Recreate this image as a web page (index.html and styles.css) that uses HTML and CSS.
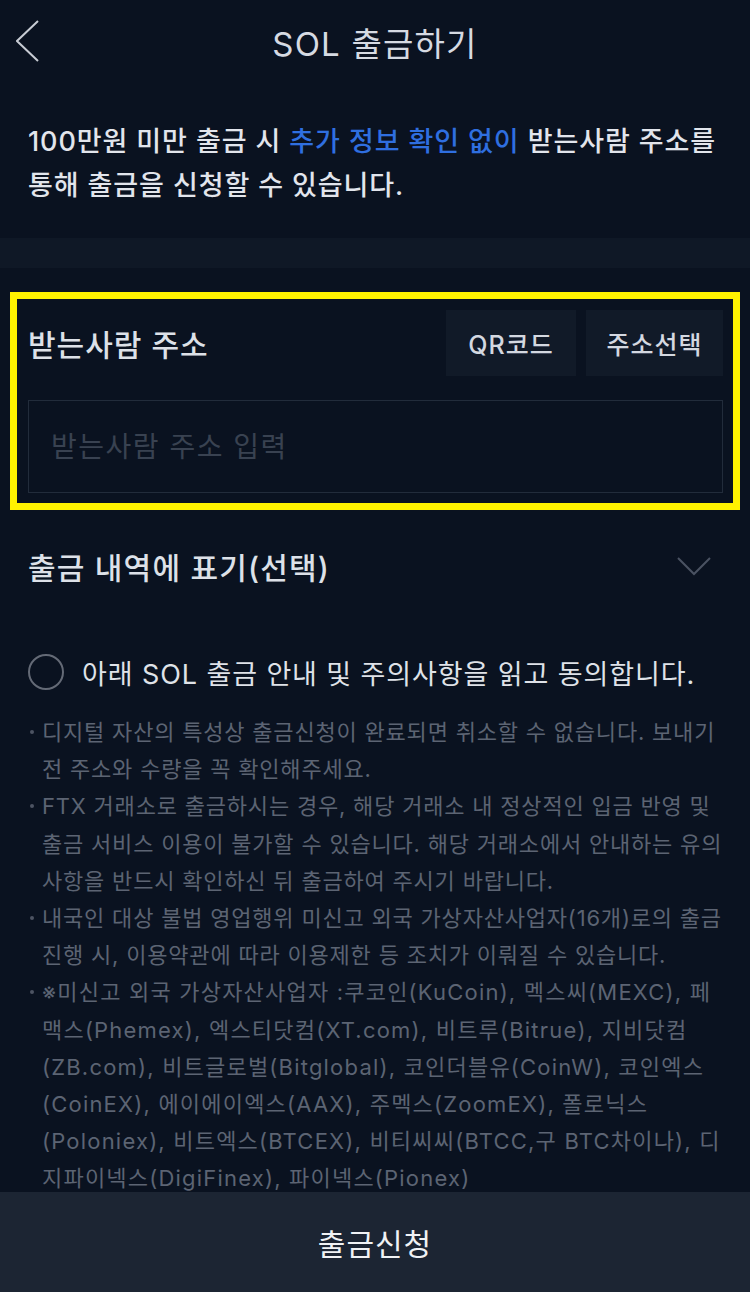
FILE: index.html
```html
<!DOCTYPE html>
<html lang="ko">
<head>
    <meta charset="UTF-8">
    <meta name="viewport" content="width=device-width, initial-scale=1.0">
    <title>SOL 출금하기</title>
    <link rel="stylesheet" href="styles.css">
</head>
<body>
    <div class="header">
        <a class="back" href="#">
            <svg width="24" height="44" viewBox="0 0 24 44"><polyline points="22,1 1,21 22,41" fill="none" stroke="#c8ccd4" stroke-width="2"/></svg>
        </a>
        <h1>SOL 출금하기</h1>
        <span></span>
    </div>

    <p class="intro">100만원 미만 출금 시 <span class="blue">추가 정보 확인 없이</span> 받는사람 주소를 통해 출금을 신청할 수 있습니다.</p>

    <div class="band"></div>

    <div class="highlight">
        <div class="addr-head">
            <span class="label">받는사람 주소</span>
            <div class="addr-btns">
                <button class="small-btn qr">QR코드</button>
                <button class="small-btn pick">주소선택</button>
            </div>
        </div>
        <input class="addr-input" type="text" placeholder="받는사람 주소 입력">
    </div>

    <div class="memo-row">
        <span class="label memo">출금 내역에 표기(선택)</span>
        <svg width="34" height="20" viewBox="0 0 34 20"><polyline points="1,2 17,18 33,2" fill="none" stroke="#4a5262" stroke-width="2"/></svg>
    </div>

    <div class="agree">
        <span class="radio"></span>
        <span>아래 SOL 출금 안내 및 주의사항을 읽고 동의합니다.</span>
    </div>

    <ul class="notes">
        <li>디지털 자산의 특성상 출금신청이 완료되면 취소할 수 없습니다. 보내기 전 주소와 수량을 꼭 확인해주세요.</li>
        <li>FTX 거래소로 출금하시는 경우, 해당 거래소 내 정상적인 입금 반영 및 출금 서비스 이용이 불가할 수 있습니다. 해당 거래소에서 안내하는 유의사항을 반드시 확인하신 뒤 출금하여 주시기 바랍니다.</li>
        <li>내국인 대상 불법 영업행위 미신고 외국 가상자산사업자(16개)로의 출금 진행 시, 이용약관에 따라 이용제한 등 조치가 이뤄질 수 있습니다.</li>
        <li class="exchanges">※미신고 외국 가상자산사업자 :쿠코인(KuCoin), 멕스씨(MEXC), 페맥스(Phemex), 엑스티닷컴(XT.com), 비트루(Bitrue), 지비닷컴(ZB.com), 비트글로벌(Bitglobal), 코인더블유(CoinW), 코인엑스(CoinEX), 에이에이엑스(AAX), 주멕스(ZoomEX), 폴로닉스(Poloniex), 비트엑스(BTCEX), 비티씨씨(BTCC,구 BTC차이나), 디지파이넥스(DigiFinex), 파이넥스(Pionex)</li>
    </ul>

    <button class="submit">출금신청</button>
</body>
</html>
```

FILE: styles.css
```css
body {
    margin: 0;
    background-color: #0a1220;
    color: #e2e5ec;
    font-family: Inter, "Noto Sans CJK KR", sans-serif;
    overflow: hidden;
}

.header {
    display: grid;
    grid-template-columns: 60px 1fr 60px;
    align-items: center;
    height: 84px;
}

.back {
    display: flex;
    padding-left: 16px;
}

.header h1 {
    margin: 0;
    text-align: center;
    font-size: 33px;
    font-weight: 400;
    letter-spacing: 1.2px;
    color: #d6dae2;
}

.intro {
    margin: 0;
    padding: 36px 20px 30px 28px;
    font-size: 27px;
    line-height: 44px;
    font-weight: 500;
    letter-spacing: 0.9px;
}

.blue {
    color: #2f6fe0;
}

.band {
    height: 30px;
    background-color: #0f1826;
}

/* yellow highlight box */
.highlight {
    margin: 24px 10px 0;
    border: 7px solid #fff200;
    padding: 11px 10px 10px 11px;
}

.addr-head {
    display: flex;
    justify-content: space-between;
    align-items: center;
}

.label {
    font-size: 30px;
    font-weight: 500;
    letter-spacing: 1px;
    color: #dde1e8;
}

.memo {
    letter-spacing: 1.2px;
}

.addr-btns {
    display: flex;
    gap: 10px;
}

.small-btn {
    height: 66px;
    border: none;
    background-color: #111a28;
    color: #d4d8e0;
    font-family: inherit;
    font-size: 25px;
    font-weight: 500;
    letter-spacing: 1px;
}

.qr {
    width: 130px;
}

.pick {
    width: 137px;
}

.addr-input {
    display: block;
    box-sizing: border-box;
    width: 100%;
    height: 93px;
    margin-top: 24px;
    padding: 0 22px;
    background: transparent;
    border: 1px solid #222c3b;
    font-family: inherit;
    font-size: 28px;
    letter-spacing: 1.5px;
    color: #e2e5ec;
}

.addr-input::placeholder {
    color: #394251;
}

.memo-row {
    display: flex;
    justify-content: space-between;
    align-items: center;
    height: 112px;
    padding: 0 39px 0 28px;
}

.agree {
    display: flex;
    align-items: center;
    gap: 18px;
    height: 72px;
    margin-top: 14px;
    padding: 0 28px;
    font-size: 27px;
    letter-spacing: 0.9px;
    color: #dfe2e8;
}

.radio {
    width: 32px;
    height: 32px;
    border: 2px solid #646a76;
    border-radius: 50%;
    flex-shrink: 0;
}

.notes {
    list-style: none;
    margin: 0;
    padding: 6px 22px 120px 42px;
    font-size: 22px;
    line-height: 37.2px;
    letter-spacing: 0.8px;
    color: #5c6473;
}

.notes li {
    position: relative;
}

.notes li::before {
    content: "";
    position: absolute;
    left: -12px;
    top: 16px;
    width: 4px;
    height: 4px;
    border-radius: 50%;
    background-color: #4d5462;
}

/* latin-heavy item, a bit wider in the original font */
.notes .exchanges {
    letter-spacing: 1.2px;
}

.submit {
    position: fixed;
    left: 0;
    bottom: 0;
    width: 100%;
    height: 100px;
    border: none;
    background-color: #1c2533;
    color: #f0f2f5;
    font-family: inherit;
    font-size: 30px;
    letter-spacing: 1px;
}
```
